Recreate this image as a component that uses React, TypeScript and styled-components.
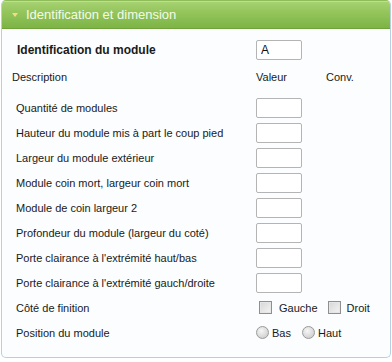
import React from "react";
import styled, { createGlobalStyle } from "styled-components";

const GlobalStyle = createGlobalStyle`
  html, body {
    margin: 0;
    padding: 0;
    background: #ffffff;
  }
  body {
    font-family: "Liberation Sans", Arial, sans-serif;
    font-size: 11px;
    color: #1a1a1a;
  }
`;

const Panel = styled.div`
  box-sizing: border-box;
  margin-left: 1px;
  width: 390px;
  height: 358px;
  border: 1px solid #b7cfe0;
  border-top-color: #8fbd5a;
  border-radius: 5px;
  background: #fbfdfe;
  overflow: hidden;
`;

const Header = styled.div`
  height: 27px;
  display: flex;
  align-items: center;
  gap: 8px;
  padding-left: 10px;
  background: linear-gradient(#a8d373 0%, #92c45a 45%, #7db446 100%);
  border-bottom: 1px solid #6fa33a;
  box-shadow: inset 0 1px 0 #bde08f;
  color: #f4fbe8;
  font-size: 13px;
`;

const Caret = styled.span`
  width: 0;
  height: 0;
  border-left: 3.5px solid transparent;
  border-right: 3.5px solid transparent;
  border-top: 4px solid #f3dc84;
  margin-top: 1px;
`;

const Body = styled.div`
  padding: 8px 0 0 0;
`;

const Row = styled.div<{ $mt?: number; $mb?: number }>`
  display: grid;
  grid-template-columns: 254px 70px 1fr;
  align-items: center;
  height: 25px;
  margin-top: ${(p) => p.$mt ?? 0}px;
  margin-bottom: ${(p) => p.$mb ?? 0}px;
`;

const Label = styled.span<{ $bold?: boolean; $indent?: number }>`
  padding-left: ${(p) => p.$indent ?? 0}px;
  font-weight: ${(p) => (p.$bold ? 700 : 400)};
  font-size: ${(p) => (p.$bold ? "12px" : "11px")};
  white-space: nowrap;
`;

const Input = styled.input`
  box-sizing: border-box;
  width: 46px;
  height: 20px;
  border: 1px solid #b4b4b4;
  border-radius: 2px;
  background: #ffffff;
  padding: 0 4px;
  font-family: "Liberation Sans", Arial, sans-serif;
  font-size: 12px;
  color: #111;
  outline: none;
`;

const Choices = styled.div`
  display: flex;
  align-items: center;
  grid-column: 2 / 4;
`;

const Choice = styled.label<{ $gap: number; $after: number }>`
  display: flex;
  align-items: center;
  gap: ${(p) => p.$gap}px;
  margin-right: ${(p) => p.$after}px;
`;

const Box = styled.span`
  box-sizing: border-box;
  width: 13px;
  height: 13px;
  margin-left: 3px;
  border: 1px solid #8f8f8f;
  background: linear-gradient(135deg, #d6d6d6, #f4f4f4);
  box-shadow: inset 0 0 0 1px #e6e6e6;
`;

const Radio = styled.span`
  box-sizing: border-box;
  width: 13px;
  height: 13px;
  border-radius: 50%;
  border: 1px solid #9a9a9a;
  background: radial-gradient(circle at 40% 35%, #f6f6f6 0%, #d4d4d4 70%, #c4c4c4 100%);
`;

const fields = [
  "Quantité de modules",
  "Hauteur du module mis à part le coup pied",
  "Largeur du module extérieur",
  "Module coin mort, largeur coin mort",
  "Module de coin largeur 2",
  "Profondeur du module (largeur du coté)",
  "Porte clairance à l'extrémité haut/bas",
  "Porte clairance à l'extrémité gauch/droite",
];

export default function App() {
  return (
    <>
      <GlobalStyle />
      <Panel>
        <Header>
          <Caret />
          <span>Identification et dimension</span>
        </Header>
        <Body>
          <Row>
            <Label $bold $indent={15}>Identification du module</Label>
            <Input defaultValue="A" />
          </Row>
          <Row $mt={2} $mb={6}>
            <Label $indent={10}>Description</Label>
            <Label>Valeur</Label>
            <Label>Conv.</Label>
          </Row>
          {fields.map((f) => (
            <Row key={f}>
              <Label $indent={14}>{f}</Label>
              <Input />
            </Row>
          ))}
          <Row>
            <Label $indent={14}>Côté de finition</Label>
            <Choices>
              <Choice $gap={7} $after={7}>
                <Box />
                Gauche
              </Choice>
              <Choice $gap={6} $after={0}>
                <Box />
                Droit
              </Choice>
            </Choices>
          </Row>
          <Row>
            <Label $indent={14}>Position du module</Label>
            <Choices>
              <Choice $gap={3} $after={11}>
                <Radio />
                Bas
              </Choice>
              <Choice $gap={3} $after={0}>
                <Radio />
                Haut
              </Choice>
            </Choices>
          </Row>
        </Body>
      </Panel>
    </>
  );
}
